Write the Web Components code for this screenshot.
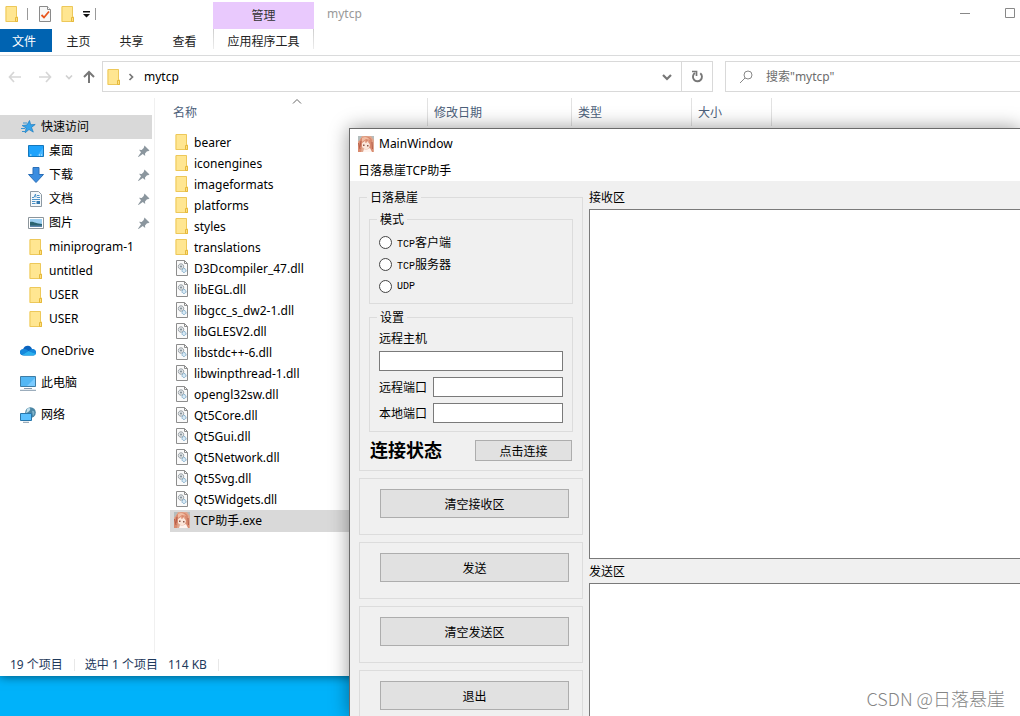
<!DOCTYPE html>
<html lang="zh-CN">
<head>
<meta charset="utf-8">
<title>mytcp</title>
<style>
html, body { margin: 0; height: 100%; }
body { font: 12px/16px "Noto Sans", "Noto Sans CJK SC", sans-serif; color: #000; overflow: hidden; }
</style>
</head>
<body>
<desk-top></desk-top>
<script>
const define = (name, html, init) => {
  const template = document.createElement('template');
  template.innerHTML = html;
  customElements.define(name, class extends HTMLElement {
    constructor() {
      super();
      this.attachShadow({ mode: 'open' }).append(template.content.cloneNode(true));
    }
    connectedCallback() { if (init) init(this, this.shadowRoot); }
  });
};

const icons = {
  folder: '<path d="M1.5.5h11.500v10h1v5.500H1.500z" fill="#ffe48f"/><path d="M2 .5h10.500v11h1v4H2z" fill="#ffe691" stroke="#edc85a"/><path d="M11.500 15.500v-4h2v4z" fill="#ffdf80" stroke="#e5b93c"/>',
  check: '<path d="M2.500.5h8l3 3v12h-11z" fill="#f7f7f7" stroke="#8a8a8a"/><path d="M10.500.5v3h3" fill="#fff" stroke="#8a8a8a"/><path d="M4.500 9l2.500 2.500 5-6" fill="none" stroke="#e8551c" stroke-width="1.800"/>',
  menu: '<path d="M4 5h7v1.500H4zM4 8h7l-3.500 3.500z" fill="#111"/>',
  min: '<path d="M3 8.500h10" stroke="#888"/>',
  max: '<path d="M3.500 3.500h9v9h-9z" fill="none" stroke="#888"/>',
  back: '<path d="M14 8H2.500M7 3L2.500 8 7 13" fill="none" stroke="#d6d6d6" stroke-width="1.700"/>',
  forward: '<path d="M2 8h11.500M9 3l4.500 5L9 13" fill="none" stroke="#d6d6d6" stroke-width="1.700"/>',
  recent: '<path d="M5 6.500l3 3 3-3" fill="none" stroke="#d0d0d0" stroke-width="1.700"/>',
  up: '<path d="M8 14V3.500M3 8l5-5 5 5" fill="none" stroke="#777" stroke-width="2"/>',
  right: '<path d="M5.500 5l3 3-3 3" fill="none" stroke="#777" stroke-width="1.700"/>',
  down: '<path d="M4 6l4 4 4-4" fill="none" stroke="#777" stroke-width="2.200"/>',
  refresh: '<path d="M11.300 4.300A4.500 4.500 0 1 1 6 4" fill="none" stroke="#777" stroke-width="1.900"/><path d="M13.500 3H9.500v4.500" fill="none" stroke="#777" stroke-width="0"/><path d="M3 2.500h4.500V7" fill="none" stroke="#777" stroke-width="1.700"/>',
  search: '<circle cx="10" cy="6" r="4" fill="none" stroke="#888"/><path d="M7 9L2 14" stroke="#888" fill="none"/>',
  sort: '<path d="M4 10.500l4-4 4 4" fill="none" stroke="#666"/>',
  star: '<path d="M9.500 1.500l1.200 4.200 4.500-.2-3.700 2.900 1.800 4.700-4.300-2.600-3.800 3.300.9-5L2 6.500l4.900-.5z" fill="#35a3ea" stroke="#187bc0" stroke-width=".7"/><path d="M3 4h4M1 9.500h4M2 12.500h4M2 6.500h3" stroke="#3a94d0"/>',
  desktop: '<path d="M.5 2.500h15v11H.5z" fill="#1ea3fc" stroke="#1577bb"/><path d="M9 13L15 5v8z" fill="#45b5ff"/><path d="M2 12h1.500M11 12h1M13 12h1" stroke="#d9f2ff"/>',
  download: '<path d="M5 .5h6v7h4.500L8 15.500.5 7.500H5z" fill="#3b8de0" stroke="#2a6fb8"/>',
  document: '<path d="M2.500.5h8l3 3v12h-11z" fill="#f5f8fa" stroke="#8d99a3"/><path d="M4 6.500h2L7.500 3 8 6.500M9 4.500h2.500M9 6.500h3M4 8.500h8M4 10.500h3.500M4 12.500h3.500" fill="none" stroke="#4c93c8"/><path d="M8.500 10h3.500v3H8.500z" fill="#3479ae"/>',
  picture: '<path d="M.5 2.500h15v11H.5z" fill="#fff" stroke="#8c959b"/><path d="M2 4h12v8H2z" fill="#9ccff1"/><path d="M2 7c3-1 6 2 12 2v3H2z" fill="#2b6471"/><path d="M2 10.500h12V12H2z" fill="#5c86ad"/>',
  cloud: '<path d="M4 12.500C1 12.500 0 11 0 9.300 0 7.400 1.500 6.300 3 6.200 4 3.500 6 2.500 8 2.700c2 .1 3.500 1.600 4 3.300 2.500 0 4 1.500 4 3.500 0 1.700-1.200 3-3 3z" fill="#0a63be"/><path d="M3 6.200c2.500-.4 4 .8 5.500 1.800L12 6c2.500 0 4 1.500 4 3.500 0 .4-.1.800-.2 1.200L8.500 8 2 12C.7 11.500 0 10.500 0 9.300 0 7.400 1.500 6.300 3 6.200z" fill="#1688dc"/><path d="M2 12l6.500-4 7.300 2.700c-.4 1.100-1.500 1.800-2.800 1.800H4z" fill="#2bb0ee"/>',
  computer: '<path d="M.5 1.500h15v10H.5z" fill="#53b7f4" stroke="#3f7da5"/><path d="M7 11L15 3v8z" fill="#7bcbff"/><path d="M4 13.500h8M0 15.300h16" stroke="#8499ac"/>',
  network: '<circle cx="10.500" cy="5.500" r="5.300" fill="#4b86a4"/><path d="M7 2c2-2 4-1 3 1S7 5 6 7z" fill="#c3e0ec"/><path d="M12 4c3-1 3 3 1 5z" fill="#7fb2cb"/><path d="M.5 6.500h11v7H.5z" fill="#59c0ff" stroke="#2876aa"/><path d="M3 15.300h6" stroke="#8499ac"/>',
  pin: '<path d="M8.500 2.500l5 5-1.500.7-1 .1-2 2.200.2 2.500-2.400-2L2.500 14l-.5-.3 3-4.500-2-2.400 2.700.2 2-2z" fill="#8b969e"/>',
  dll: '<path d="M2.500.5h8l3 3v12h-11z" fill="#fafafa" stroke="#8d8d8d"/><path d="M10.500.5v3h3" fill="none" stroke="#8d8d8d"/><circle cx="7" cy="6.500" r="2.700" fill="#dfe3e6" stroke="#8c9399" stroke-dasharray="1.700 .4"/><circle cx="7" cy="6.500" r="1" fill="#7e8b93"/><circle cx="10" cy="10.500" r="2" fill="#d9eaf5" stroke="#79a7c7" stroke-dasharray="1.700 .4"/>',
  avatar: '<path d="M0 0h16v16H0z" fill="#e0a890"/><path d="M0 0h4L1 5H0zM13 0h3v4z" fill="#b4bdbd"/><path d="M2 4C4 0 11-1 14 4l1 12h-3l-1-7-3-4-4 4-1 7H0V8z" fill="#d98a6e"/><path d="M4 2c3-2 6-1 8 2L8 3 4 6z" fill="#f2bda3"/><path d="M4 7l3-2 1 2 2-2 2 4-1 3-3 2-4-3z" fill="#fbe6da"/><path d="M5 8.500h1.500V10H5zM9 9h1.500v1.500H9z" fill="#8c5648"/><path d="M6 13l2 1 4-2 2 4H5z" fill="#fff4ef"/><path d="M.5 7L2 13M14 6l.5 7M3 5l-1 6" fill="none" stroke="#b55f4b"/><path d="M7 4l1 3M10 3l1 4" stroke="#e5a287"/>'
};

define('ui-icon', `
<style>:host { display: block; flex: none; width: 16px; height: 16px; } svg { display: block; }</style>
<svg width="16" height="16" viewBox="0 0 16 16" aria-hidden="true"></svg>`,
(el, root) => { root.querySelector('svg').innerHTML = icons[el.getAttribute('name')] || ''; });

define('title-strip', `
<style>
:host { display: grid; grid-template-columns: 213px 101px 1fr auto; height: 29px; }
.quick { display: flex; align-items: center; padding: 0 0 2px 4px; }
.bar { width: 1px; height: 12px; background: #999; }
.first { margin: 0 9px 0 7px; }
.new { margin: 0 3px 0 7px; }
.context { margin-top: 2px; background: #e9c9fd; text-align: center; line-height: 28px; height: 27px; color: #333; }
.title { padding-left: 13px; line-height: 28px; color: #999; }
.controls { display: flex; align-items: flex-start; gap: 29px; padding: 5px 2px 0 0; }
button { border: 0; padding: 0; background: none; }
</style>
<div class="quick"><ui-icon name="folder"></ui-icon><i class="bar first"></i><ui-icon name="check"></ui-icon><ui-icon class="new" name="folder"></ui-icon><ui-icon name="menu"></ui-icon><i class="bar"></i></div>
<div class="context">管理</div>
<div class="title">mytcp</div>
<div class="controls"><button aria-label="最小化"><ui-icon name="min"></ui-icon></button><button aria-label="最大化"><ui-icon name="max"></ui-icon></button></div>`);

define('ribbon-tabs', `
<style>
:host { display: flex; height: 26px; border-bottom: 1px solid #dadbdc; color: #222; }
a { width: 53px; height: 23px; line-height: 26px; text-align: center; color: inherit; text-decoration: none; }
.file { width: 48px; padding-right: 4px; background: #0063b1; color: #fff; }
.tools { box-sizing: border-box; width: 101px; height: 20px; margin-left: 2px; border: solid; border-width: 0 1px; border-image: linear-gradient(#ccc, #eee) 1; }
</style>
<a href="#file" class="file">文件</a><a href="#home">主页</a><a href="#share">共享</a><a href="#view">查看</a><a href="#tools" class="tools">应用程序工具</a>`);

define('address-row', `
<style>
:host { display: grid; grid-template-columns: 102px minmax(0, 1fr) 295px; height: 31px; padding-top: 5px; }
.arrows, .path, .search { display: flex; align-items: center; }
.arrows { padding-left: 7px; }
button { padding: 0; border: 0; background: none; }
.arrows button:nth-child(2) { margin: 0 8px 0 14px; }
.arrows button:nth-child(4) { margin-left: 4px; }
.path { border: 1px solid #d9d9d9; margin-right: 12px; padding-left: 3px; }
.crumb { margin: 0 2px; }
.path span { flex: 1; margin-left: 2px; }
.refresh { display: flex; align-items: center; justify-content: center; align-self: stretch; width: 31px; margin-left: 6px; border-left: 1px solid #d9d9d9; }
.search { border: 1px solid #d9d9d9; border-right: 0; padding-left: 12px; }
input { flex: 1; min-width: 0; margin-left: 12px; padding: 0; border: 0; font: inherit; }
input::placeholder { color: #6d6d6d; }
</style>
<div class="arrows"><button aria-label="后退"><ui-icon name="back"></ui-icon></button><button aria-label="前进"><ui-icon name="forward"></ui-icon></button><button aria-label="最近"><ui-icon name="recent"></ui-icon></button><button aria-label="向上"><ui-icon name="up"></ui-icon></button></div>
<div class="path"><ui-icon name="folder"></ui-icon><ui-icon class="crumb" name="right"></ui-icon><span>mytcp</span><button aria-label="展开"><ui-icon name="down"></ui-icon></button><button class="refresh" aria-label="刷新"><ui-icon name="refresh"></ui-icon></button></div>
<div class="search"><ui-icon name="search"></ui-icon><input aria-label="搜索" placeholder='搜索"mytcp"'></div>`);

define('nav-item', `
<style>
:host { display: block; width: 152px; }
:host([child]) a { padding-left: 28px; }
:host([selected]) { background: #d9d9d9; }
:host([root]) { margin-top: 8px; }
a { display: flex; align-items: center; gap: 5px; height: 24px; padding: 0 0 0 20px; color: #000; text-decoration: none; }
span { flex: 1; white-space: nowrap; }
.pin { display: none; }
:host([pinned]) .pin { display: block; }
</style>
<a href="#"><span><slot></slot></span><ui-icon name="pin" class="pin"></ui-icon></a>`,
(el, root) => {
  const icon = document.createElement('ui-icon');
  icon.setAttribute('name', el.getAttribute('icon'));
  root.querySelector('a').prepend(icon);
});

define('nav-pane', `
<style>
:host { display: block; margin-top: 6px; padding-top: 17px; border-right: 1px solid #f0f0f0; }
</style>
<nav>
<nav-item icon="star" selected>快速访问</nav-item>
<nav-item icon="desktop" child pinned>桌面</nav-item>
<nav-item icon="download" child pinned>下载</nav-item>
<nav-item icon="document" child pinned>文档</nav-item>
<nav-item icon="picture" child pinned>图片</nav-item>
<nav-item icon="folder" child>miniprogram-1</nav-item>
<nav-item icon="folder" child>untitled</nav-item>
<nav-item icon="folder" child>USER</nav-item>
<nav-item icon="folder" child>USER</nav-item>
<nav-item icon="cloud" root>OneDrive</nav-item>
<nav-item icon="computer" root>此电脑</nav-item>
<nav-item icon="network" root>网络</nav-item>
</nav>`);

define('file-list', `
<style>
:host { display: block; padding-left: 15px; overflow: hidden; }
table { border-collapse: collapse; table-layout: fixed; width: 602px; }
th { height: 38px; padding: 2px 0 0 6px; text-align: left; font-weight: normal; color: #4c607a; background: linear-gradient(#e2e2e2, #e2e2e2) right center / 1px 28px no-repeat; }
th:first-child { position: relative; padding-left: 3px; }
.sort { position: absolute; top: 1px; left: 119px; }
td { padding: 0; height: 21px; }
.name { display: flex; align-items: center; gap: 4px; padding-left: 4px; }
.name ui-icon { margin-bottom: 2px; }
.name span { line-height: 18px; }
.selected td { background: #d9d9d9; height: 22px; }
</style>
<table>
<colgroup><col style="width:258px"><col style="width:144px"><col style="width:120px"><col style="width:80px"></colgroup>
<thead><tr><th>名称<ui-icon class="sort" name="sort"></ui-icon></th><th>修改日期</th><th>类型</th><th>大小</th></tr></thead>
<tbody></tbody>
</table>`,
(el, root) => {
  const folders = ['bearer', 'iconengines', 'imageformats', 'platforms', 'styles', 'translations'];
  const libs = ['D3Dcompiler_47', 'libEGL', 'libgcc_s_dw2-1', 'libGLESV2', 'libstdc++-6', 'libwinpthread-1', 'opengl32sw', 'Qt5Core', 'Qt5Gui', 'Qt5Network', 'Qt5Svg', 'Qt5Widgets'];
  const row = (icon, name, cls = '') => `<tr class="${cls}"><td><div class="name"><ui-icon name="${icon}"></ui-icon><span>${name}</span></div></td><td></td><td></td><td></td></tr>`;
  root.querySelector('tbody').innerHTML = folders.map(n => row('folder', n)).join('')
    + libs.map(n => row('dll', n + '.dll')).join('') + row('avatar', 'TCP助手.exe', 'selected');
});

define('status-bar', `
<style>
:host { display: flex; align-items: center; height: 23px; padding-left: 10px; color: #1e395b; }
span { padding-right: 11px; }
.sep { border-right: 1px solid #e8e8e8; line-height: 12px; }
.count { padding: 0 10px; }
</style>
<span class="sep">19 个项目</span><span class="count">选中 1 个项目</span><span class="sep">114 KB</span>`);

define('file-explorer', `
<style>
:host { display: grid; grid-template-rows: auto auto auto minmax(0, 1fr) auto; background: #fff; box-shadow: 0 0 10px rgba(0, 0, 0, .6); }
main { display: grid; grid-template-columns: 155px minmax(0, 1fr); }
</style>
<title-strip></title-strip>
<ribbon-tabs></ribbon-tabs>
<address-row></address-row>
<main><nav-pane></nav-pane><file-list></file-list></main>
<status-bar></status-bar>`);

define('group-box', `
<style>
:host { display: block; }
fieldset { min-width: 0; margin: 0; padding: var(--group-padding, 0 9px 9px); border: 1px solid #dcdcdc; }
legend { margin-left: -2px; padding: 0 3px; height: 15px; line-height: 13px; }
</style>
<fieldset><legend><slot name="title"></slot></legend><slot></slot></fieldset>`);

define('push-button', `
<style>
:host { display: block; }
button { display: block; width: 100%; height: 100%; padding: 0; border: 1px solid #adadad; background: #e1e1e1; color: #000; font: inherit; }
</style>
<button><slot></slot></button>`);

define('action-box', `
<style>
:host { display: block; border: 1px solid #dcdcdc; padding: 10px 13px 16px 20px; }
push-button { height: 29px; }
</style>
<push-button><slot></slot></push-button>`);

define('connection-panel', `
<style>
:host { display: block; }
.mode { margin-top: 7px; --group-padding: 4px 9px 6px; }
.mode label { display: flex; align-items: center; gap: 5px; height: 22px; }
.mode b { font: 10px "Liberation Mono", monospace; }
input[type=radio] { width: 13px; height: 13px; margin: 0; appearance: none; border: 1px solid #444; border-radius: 50%; background: #fff; }
input[type=radio]:checked { background: radial-gradient(#222 3px, #fff 4px); }
.settings { margin-top: 6px; --group-padding: 6px 9px 8px; }
.fields { display: grid; grid-template-columns: 48px 1fr; gap: 6px; align-items: center; }
.fields label { line-height: 14px; white-space: nowrap; }
.wide { grid-column: 1 / -1; }
input[type=text] { box-sizing: border-box; width: 100%; height: 20px; border: 1px solid #7a7a7a; background: #fff; padding: 0 3px; font: inherit; }
.state { display: flex; justify-content: space-between; height: 21px; margin-top: 8px; padding: 0 1px; }
strong { font-size: 18px; line-height: 18px; }
push-button { width: 97px; height: 21px; }
</style>
<group-box>
<span slot="title">日落悬崖</span>
<group-box class="mode"><span slot="title">模式</span>
<label><input type="radio" name="mode"><span><b>TCP</b>客户端</span></label>
<label><input type="radio" name="mode"><span><b>TCP</b>服务器</span></label>
<label><input type="radio" name="mode"><b>UDP</b></label>
</group-box>
<group-box class="settings"><span slot="title">设置</span>
<div class="fields">
<label class="wide" for="host">远程主机</label><input class="wide" id="host" type="text">
<label for="remote">远程端口</label><input id="remote" type="text">
<label for="local">本地端口</label><input id="local" type="text">
</div>
</group-box>
<div class="state"><strong>连接状态</strong><push-button>点击连接</push-button></div>
</group-box>`);

define('text-panes', `
<style>
:host { display: grid; grid-template-rows: auto minmax(0, 350fr) auto minmax(0, 133fr); gap: 5px; min-width: 0; }
label { line-height: 14px; }
textarea { box-sizing: border-box; width: 100%; height: 100%; border: 1px solid #7a7a7a; border-right: 0; margin: 0; padding: 4px; resize: none; font: inherit; background: #fff; }
#outgoing { border-bottom: 0; }
</style>
<label for="received">接收区</label><textarea id="received"></textarea>
<label for="outgoing">发送区</label><textarea id="outgoing"></textarea>`);

define('main-window', `
<style>
:host { display: grid; grid-template-rows: auto auto minmax(0, 1fr); border: solid #6a6a6a; border-width: 1px 0 0 1px; background: #f0f0f0; box-shadow: 0 0 18px rgba(0, 0, 0, .4); }
header { display: flex; align-items: center; gap: 5px; height: 29px; padding-left: 8px; background: #fff; }
.menu { height: 23px; padding-left: 8px; background: #fff; line-height: 26px; }
.menu a { color: inherit; text-decoration: none; }
.body { display: grid; grid-template-columns: 224px minmax(0, 1fr); gap: 6px; padding: 9px 0 0 9px; font-family: "Noto Sans CJK SC", sans-serif; overflow: hidden; }
.side { display: flex; flex-direction: column; gap: 7px; min-height: 0; }
.side > * { flex: none; }
</style>
<header><ui-icon name="avatar"></ui-icon><span>MainWindow</span></header>
<div class="menu"><a href="#menu">日落悬崖TCP助手</a></div>
<div class="body">
<div class="side">
<connection-panel></connection-panel>
<action-box>清空接收区</action-box>
<action-box>发送</action-box>
<action-box>清空发送区</action-box>
<action-box>退出</action-box>
</div>
<text-panes></text-panes>
</div>`);

define('desk-top', `
<style>
:host { display: block; position: relative; height: 100vh; overflow: hidden; background: #00b2fa; }
file-explorer { height: calc(100% - 40px); }
main-window { position: absolute; inset: 128px 0 0 349px; }
.mark { position: absolute; right: 15px; bottom: 6px; font: 300 18px/24px "Noto Sans CJK SC", sans-serif; color: #858585; }
</style>
<file-explorer></file-explorer>
<main-window></main-window>
<div class="mark">CSDN @日落悬崖</div>`);
</script>
</body>
</html>
